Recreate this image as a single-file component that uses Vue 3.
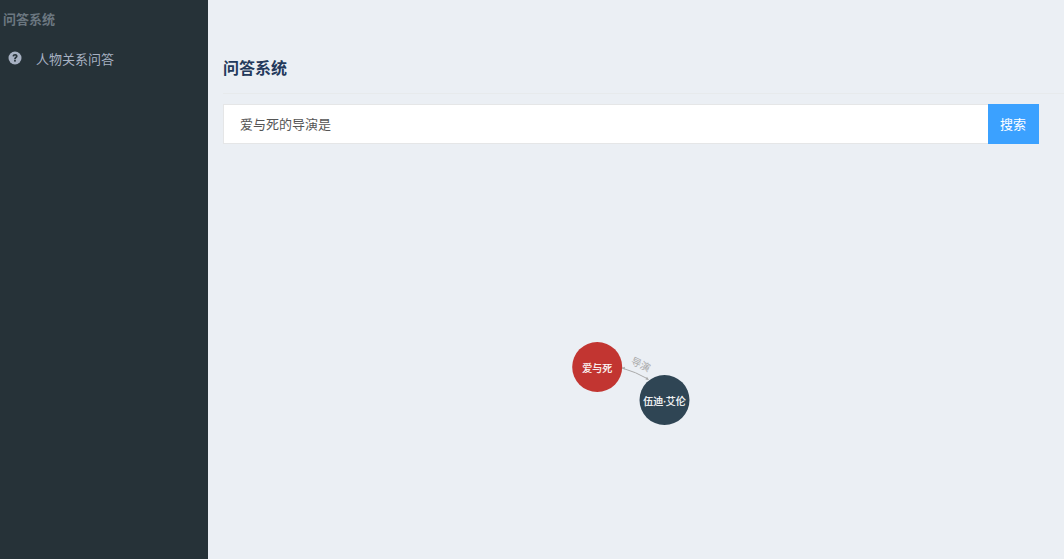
<template>
  <div class="layout">
    <aside class="sidebar">
      <div class="brand">问答系统</div>
      <div class="menu-item">
        <svg class="menu-icon" viewBox="0 0 14 14" width="14" height="14">
          <circle cx="7" cy="7" r="6.500" fill="#a7b1c2" />
          <path d="M4.500 5.300C4.600 3.900 5.700 3.100 7.100 3.100C8.600 3.100 9.600 4 9.600 5.200C9.600 6.800 7.800 6.800 7.800 8.200H6.100C6.100 6.200 7.800 6.200 7.800 5.300C7.800 4.900 7.500 4.600 7 4.600C6.600 4.600 6.300 4.900 6.100 5.600Z" fill="#263238" />
          <rect x="6.100" y="8.900" width="1.700" height="1.700" fill="#263238" />
        </svg>
        <span>人物关系问答</span>
      </div>
    </aside>
    <main class="content">
      <h3 class="page-title">问答系统</h3>
      <div class="search-row">
        <input class="search-input" v-model="question" />
        <button class="search-btn">搜索</button>
      </div>
      <div class="chart">
        <svg class="graph" width="856" height="415" viewBox="0 0 856 415">
          <path d="M414 224Q428 228 440 235" fill="none" stroke="#aaa" stroke-width="1" />
          <path d="M414 223.800L417 222.700L416.400 225.700Z" fill="#aaa" />
          <path d="M441 236L437.500 235.500L439 232.800Z" fill="#aaa" />
          <text class="edge-label" x="433" y="224" transform="rotate(25 433 220)" text-anchor="middle">导演</text>
          <circle cx="389.200" cy="223" r="25" fill="#c23531" />
          <circle cx="456.500" cy="256" r="25" fill="#2f4554" />
          <text class="node-label" x="389.200" y="228" text-anchor="middle">爱与死</text>
          <text class="node-label" x="456.500" y="261" text-anchor="middle">伍迪·艾伦</text>
        </svg>
      </div>
    </main>
  </div>
</template>

<script setup>
import { ref } from 'vue'

const question = ref('爱与死的导演是')
</script>

<style>
html, body {
  margin: 0;
  background: #ebeff4;
}
</style>

<style scoped>
.layout {
  display: flex;
  height: 559px;
  overflow: hidden;
  font-family: "Open Sans", "Liberation Sans", "Noto Sans CJK SC", sans-serif;
}

.sidebar {
  width: 208px;
  flex-shrink: 0;
  background: #263238;
}
.brand {
  padding: 11px 3px 0;
  height: 27px;
  font-size: 13px;
  line-height: 17px;
  font-weight: 700;
  color: #6b7780;
}
.menu-item {
  display: flex;
  align-items: center;
  height: 40px;
  padding-left: 8px;
  font-size: 13px;
  color: #a7b1c2;
}
.menu-icon {
  margin-right: 14px;
}

.content {
  flex: 1;
  min-width: 0;
  background: #ebeff4;
}
.page-title {
  margin: 0 0 0 15px;
  height: 94px;
  box-sizing: border-box;
  padding-top: 58px;
  border-bottom: 1px solid #e7eaec;
  font-size: 16px;
  line-height: 20px;
  font-weight: 700;
  color: #23395b;
}
.search-row {
  display: flex;
  margin: 10px 25px 0 15px;
  height: 40px;
}
.search-input {
  flex: 1;
  min-width: 0;
  box-sizing: border-box;
  padding: 0 16px 2px;
  border: 1px solid #e5e6e7;
  border-right: none;
  background: #fff;
  font-family: inherit;
  font-size: 13px;
  color: #555;
  outline: none;
}
.search-btn {
  width: 51px;
  padding: 0 1px 2px 0;
  border: none;
  background: #3ba1ff;
  color: #fff;
  font-family: inherit;
  font-size: 13px;
}

.chart {
  height: 415px;
}
.graph {
  display: block;
}
.node-label {
  font-size: 10px;
  fill: #fff;
  stroke: #fff;
  stroke-width: 0.2px;
}
.edge-label {
  font-size: 10px;
  fill: #aaa;
}
</style>
